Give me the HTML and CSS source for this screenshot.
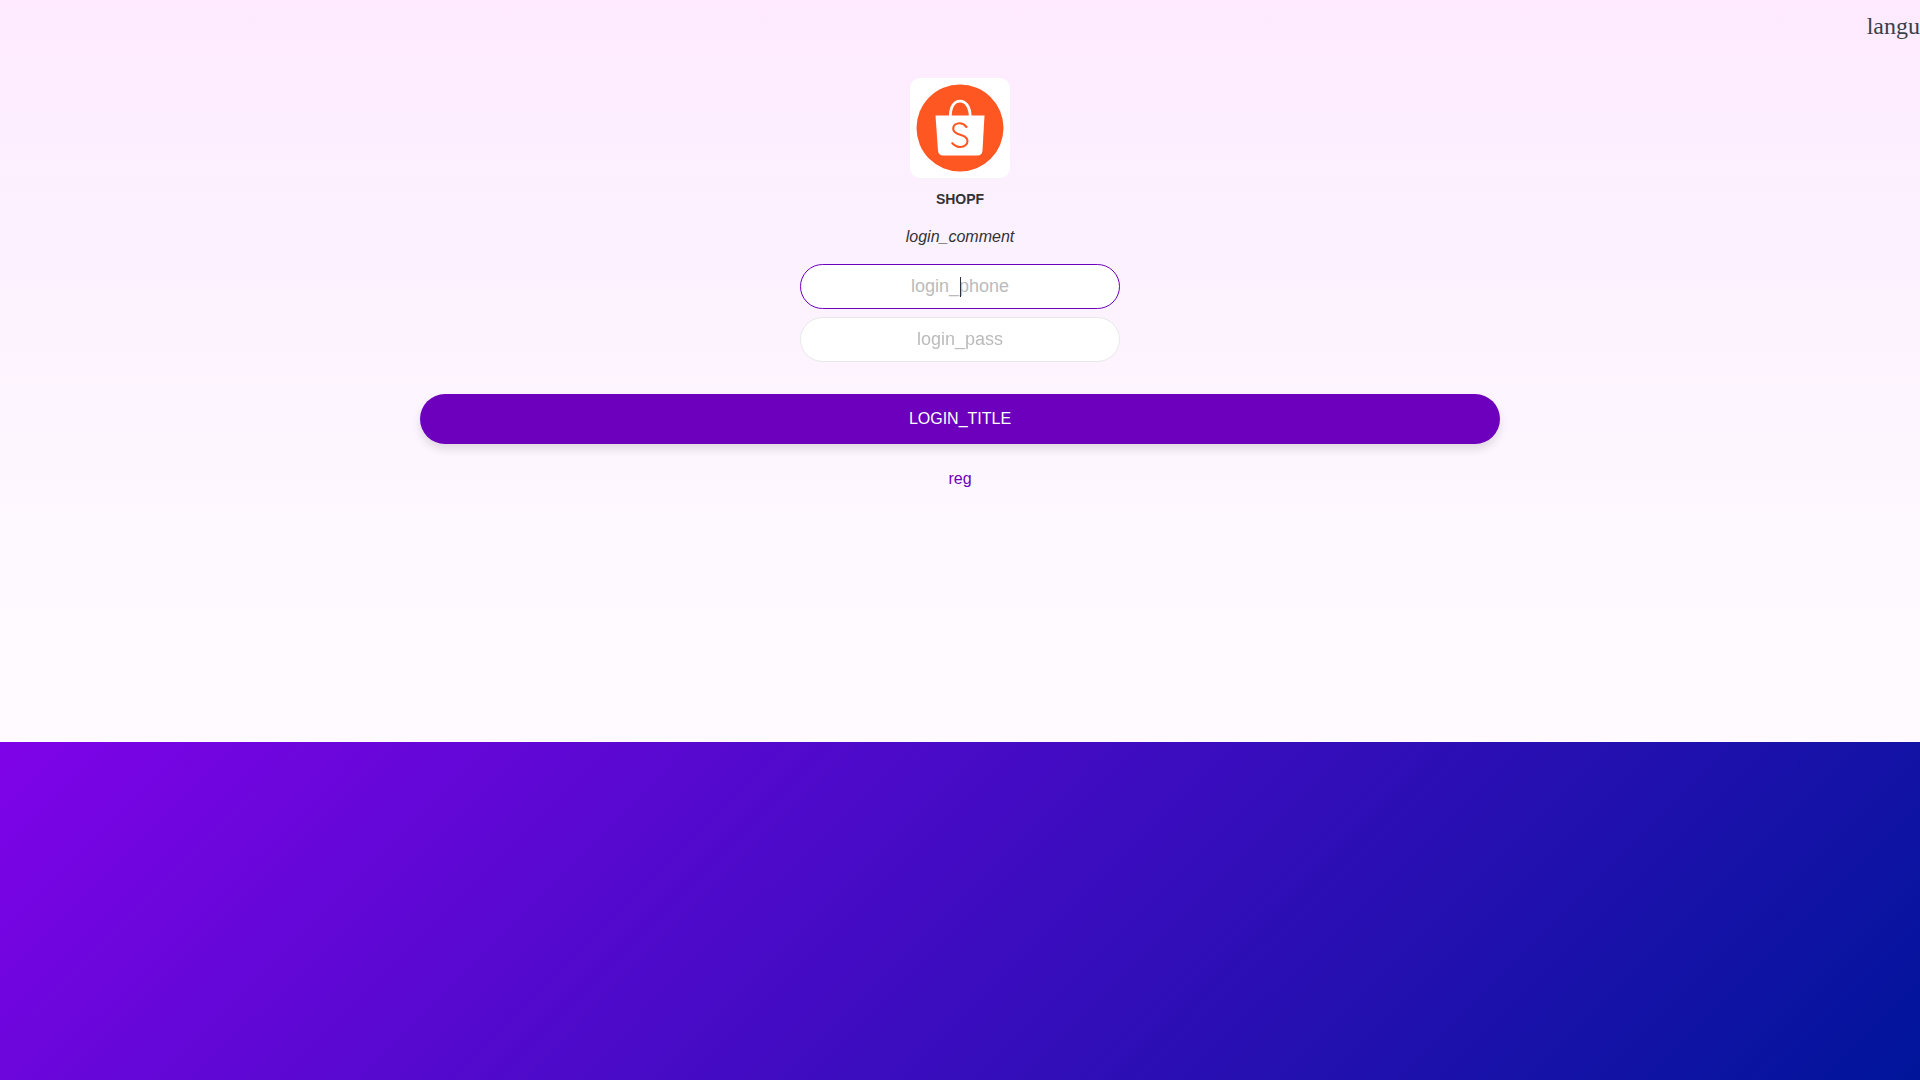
FILE: index.html
```
<!DOCTYPE html>
<html lang="en">
<head>
  <meta charset="UTF-8">
  <meta name="viewport" content="width=device-width, initial-scale=1">
  <title>SHOPF</title>
  <link rel="stylesheet" href="styles.css">
</head>
<body>
  <main class="login-page">
    <header class="topbar">
      <a href="#language" class="lang-link">langu</a>
    </header>
    <section class="brand">
      <svg class="logo" viewBox="0 0 100 100" role="img" aria-label="SHOPF logo">
        <rect width="100" height="100" fill="#fff"/>
        <circle cx="50" cy="50" r="43.5" fill="#ff5722"/>
        <path d="M40.3 39C40.3 29 44 23.2 50 23.2S60.200 29 60.200 39" fill="none" stroke="#fff" stroke-width="2.8"/>
        <path d="M25.5 37.5H74.500L72.500 72.500Q72 77.500 67.500 77.500H33Q28.500 77.500 28 72.500Z" fill="#fff"/>
        <path d="M56.500 49C54.500 46.500 52.500 45.200 49.800 45.200C46 45.200 43.200 47.300 43.200 50.700C43.200 54.300 46.500 55.600 50.200 56.700C54.500 58 57.500 59.400 57.500 63C57.500 66.500 54.500 69 50.600 69C47 69 44.500 67.600 42.300 65.200" fill="none" stroke="#ff5722" stroke-width="2.100" stroke-linecap="round"/>
      </svg>
      <h1>SHOPF</h1>
      <p>login_comment</p>
    </section>
    <form class="login-form">
      <div class="field-wrap caret">
        <input class="field" type="text" name="phone" placeholder="login_phone" aria-label="login_phone" autofocus>
      </div>
      <div class="field-wrap">
        <input class="field" type="password" name="pass" placeholder="login_pass" aria-label="login_pass">
      </div>
      <button class="login-btn" type="button">LOGIN_TITLE</button>
    </form>
    <a href="#reg" class="reg-link">reg</a>
  </main>
  <div class="backdrop"></div>
</body>
</html>
```

FILE: styles.css
```
* { box-sizing: border-box; }
body {
  margin: 0;
  min-height: 100vh;
  display: flex;
  flex-direction: column;
  font-family: "Liberation Sans", Arial, sans-serif;
  font-size: 16px;
  line-height: 24px;
  color: #333;
}
a { text-decoration: none; }
.login-page {
  display: flex;
  flex-direction: column;
  align-items: center;
  padding-bottom: 251px;
  background: linear-gradient(#ffeaff, #fcf0ff 25%, #fefaff 85%);
}
.topbar {
  width: 100%;
  height: 52px;
  display: flex;
  align-items: center;
  justify-content: flex-end;
}
.lang-link {
  font-family: "Liberation Serif", serif;
  font-size: 24px;
  color: #3a3f4a;
}
.brand {
  display: flex;
  flex-direction: column;
  align-items: center;
  padding-top: 26px;
}
.logo {
  width: 100px;
  height: 100px;
  border-radius: 10px;
}
.brand h1 {
  margin: 9px 0 0;
  font-size: 14px;
}
.brand p {
  margin: 14px 0 15px;
  font-style: italic;
}
.login-form {
  width: 100%;
  max-width: 1080px;
  display: flex;
  flex-direction: column;
  align-items: center;
}
.field-wrap {
  position: relative;
  width: 320px;
  max-width: 100%;
  margin-bottom: 8px;
}
/* steady caret while the field is focused and empty */
.caret:has(.field:focus:placeholder-shown)::after {
  content: "";
  position: absolute;
  top: 13px;
  left: 50%;
  width: 1px;
  height: 20px;
  background: #2c3440;
  pointer-events: none;
}
.field {
  display: block;
  width: 100%;
  height: 45px;
  padding: 0 20px;
  border: 1px solid #e8e8e8;
  border-radius: 23px;
  background: #fff;
  font-family: inherit;
  font-size: 18px;
  text-align: center;
  color: #2c3440;
  outline: none;
}
.field:placeholder-shown { caret-color: transparent; }
.field::placeholder { color: #bbb; }
.field:focus { border-color: #6c00bd; }
.login-btn {
  width: 100%;
  height: 50px;
  margin-top: 24px;
  border: none;
  border-radius: 25px;
  background: #6c00bd;
  box-shadow: 0 5px 10px rgba(0, 0, 0, 0.12);
  color: #fff;
  font-family: inherit;
  font-size: 16px;
  cursor: pointer;
}
.reg-link {
  margin-top: 23px;
  color: #6c00bd;
}
.backdrop {
  flex: 1;
  background: linear-gradient(135deg, #7f03e8, #00159a);
}
```
